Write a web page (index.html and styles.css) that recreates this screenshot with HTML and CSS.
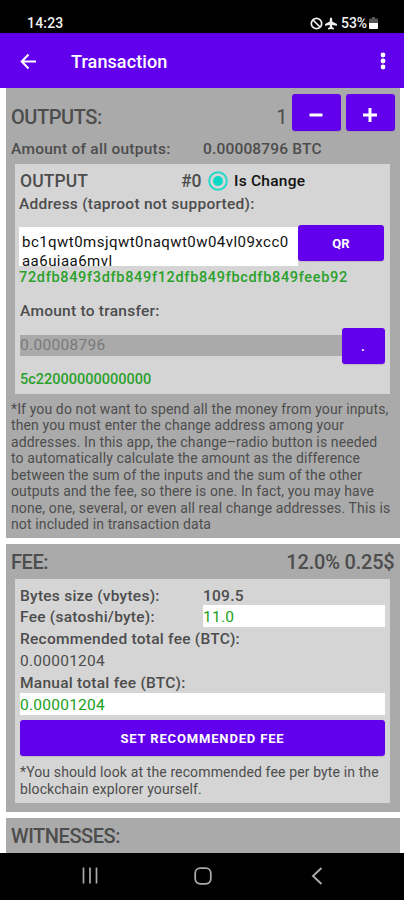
FILE: index.html
```html
<!DOCTYPE html>
<html lang="en">
<head>
<meta charset="utf-8">
<title>Transaction</title>
<link rel="stylesheet" href="styles.css">
</head>
<body>
<div class="status">
  <span class="clock">14:23</span>
  <span class="indicators">
    <svg width="13" height="13" viewBox="0 0 13 13"><circle cx="6.5" cy="6.5" r="5.2" fill="none" stroke="#eee" stroke-width="1.7"/><path d="M3 3l7 7" stroke="#eee" stroke-width="1.7"/></svg>
    <svg class="plane" width="12" height="13" viewBox="0 0 12 13"><path d="M6 .5q1.200 0 1.200 1.500v2.500l4.800 2.500v1.800L7.200 8v2l1.800 1.200v1.300L6 12l-3 .5v-1.300L4.800 10V8L0 8.800V7l4.800-2.500V2Q4.800 .5 6 .5z" fill="#eee"/></svg>
    <span class="percent">53%</span>
    <svg class="battery" width="9" height="12" viewBox="0 0 9 12"><path d="M3 0h3v1.500h2q1 0 1 1V6H0V2.500q0-1 1-1h2z" fill="#555"/><path d="M0 6h9v5q0 1-1 1H1q-1 0-1-1z" fill="#fff"/></svg>
  </span>
</div>
<header class="appbar">
  <svg class="back" width="17" height="17" viewBox="0 0 17 17"><path d="M8.500 1.500L1.700 8.500l6.800 7M2 8.500h14" fill="none" stroke="#fff" stroke-width="2"/></svg>
  <h1 class="title">Transaction</h1>
  <svg class="more" width="6" height="18" viewBox="0 0 6 18"><g fill="#fff"><circle cx="3" cy="3" r="2.400"/><circle cx="3" cy="9" r="2.400"/><circle cx="3" cy="15" r="2.400"/></g></svg>
</header>
<main class="content">
  <section class="section outputs">
    <div class="heading-row">
      <h2 class="heading outputs-label">OUTPUTS:</h2>
      <span class="count">1</span>
      <button class="button step"><svg width="16" height="16" viewBox="0 0 16 16"><path d="M1.500 8h13" stroke="#fff" stroke-width="3"/></svg></button>
      <button class="button step"><svg width="16" height="16" viewBox="0 0 16 16"><path d="M1 8h14M8 1v14" stroke="#fff" stroke-width="3"/></svg></button>
    </div>
    <div class="row total"><span class="name">Amount of all outputs:</span><span class="value">0.00008796 BTC</span></div>
    <div class="card output">
      <div class="output-head">
        <span class="output-label">OUTPUT</span><span class="number">#0</span>
        <svg class="radio" width="20" height="20" viewBox="0 0 20 20"><circle cx="10" cy="10" r="8.800" fill="none" stroke="#1fd8c8" stroke-width="1.900"/><circle cx="10" cy="10" r="5" fill="#0cdac6"/></svg>
        <span class="change">Is Change</span>
      </div>
      <div class="label address-label">Address (taproot not supported):</div>
      <div class="address-row">
        <div class="address">bc1qwt0msjqwt0naqwt0w04vl09xcc0<br>aa6uiaa6mvl</div>
        <button class="button qr">QR</button>
      </div>
      <div class="hex hash">72dfb849f3dfb849f12dfb849fbcdfb849feeb92</div>
      <div class="label transfer-label">Amount to transfer:</div>
      <div class="amount-row">
        <div class="amount">0.00008796</div>
        <button class="button dot">.</button>
      </div>
      <div class="hex amount-hex">5c22000000000000</div>
    </div>
    <p class="note explain">*If you do not want to spend all the money from your inputs,<br>then you must enter the change address among your<br>addresses. In this app, the change–radio button is needed<br>to automatically calculate the amount as the difference<br>between the sum of the inputs and the sum of the other<br>outputs and the fee, so there is one. In fact, you may have<br>none, one, several, or even all real change addresses. This is<br>not included in transaction data</p>
  </section>
  <section class="section fee">
    <div class="fee-head"><h2 class="heading fee-label">FEE:</h2><span class="rate">12.0% 0.25$</span></div>
    <div class="card fee-card">
      <div class="row"><span class="name">Bytes size (vbytes):</span><span class="value">109.5</span></div>
      <div class="row"><span class="name">Fee (satoshi/byte):</span><span class="value field per-byte">11.0</span></div>
      <div class="row">Recommended total fee (BTC):</div>
      <div class="row plain">0.00001204</div>
      <div class="row">Manual total fee (BTC):</div>
      <div class="row field plain">0.00001204</div>
      <button class="button set">SET RECOMMENDED FEE</button>
      <p class="note hint">*You should look at the recommended fee per byte in the<br>blockchain explorer yourself.</p>
    </div>
  </section>
  <section class="section witnesses"><h2 class="heading">WITNESSES:</h2></section>
</main>
<nav class="navbar">
  <svg width="16" height="17" viewBox="0 0 16 17"><path d="M1.500 .5v16M8 .5v16M14.500 .5v16" stroke="#aaa" stroke-width="1.700"/></svg>
  <svg class="home" width="18" height="18" viewBox="0 0 18 18"><rect x="1.200" y="1.200" width="15.600" height="15.600" rx="5" fill="none" stroke="#aaa" stroke-width="1.800"/></svg>
  <svg width="12" height="18" viewBox="0 0 12 18"><path d="M10.500 1L2 9l8.500 8" fill="none" stroke="#aaa" stroke-width="1.900"/></svg>
</nav>
</body>
</html>
```
FILE: styles.css
```css
* { box-sizing: border-box; }
body { margin: 0; width: 404px; height: 900px; overflow: hidden; background: #fff; color: #4d4d4d; font-family: Roboto, "Liberation Sans", sans-serif; font-weight: 500; white-space: nowrap; display: flex; flex-direction: column; }
h1, h2, p { margin: 0; }
svg { display: block; flex: none; }
.status { height: 33px; flex: none; background: #000; color: #f2f2f2; display: flex; justify-content: space-between; padding: 13px 26px 0 27px; font-size: 14px; line-height: 20px; }
.clock { letter-spacing: .2px; }
.indicators { display: flex; align-items: center; }
.plane { margin-left: 2px; }
.percent { margin-left: 4px; letter-spacing: -.1px; }
.battery { margin-left: 2px; }
.appbar { height: 55px; flex: none; background: #6200ee; display: flex; align-items: center; padding: 1px 18px 0 20px; }
.title { margin-left: 34px; flex: 1; color: #fff; font-size: 18px; font-weight: 500; letter-spacing: .1px; }
.content { height: 765px; flex: none; overflow: hidden; padding: 0 4.5px 0 6px; }
.section { background: #aaa; }
.heading { font-size: 20px; line-height: 24px; font-weight: 500; letter-spacing: -.45px; }
.outputs { height: 450px; padding: 5px 5px 0; }
.heading-row { height: 38px; display: flex; align-items: center; padding-top: 1px; }
.outputs-label { flex: 1; padding-top: 9px; }
.count { font-size: 20px; padding: 9px 4px 0 0; font-weight: 400; }
.button { border: 0; border-radius: 3px; background: #6200ee; color: #fff; font: 700 13px Roboto, sans-serif; padding: 0; display: flex; align-items: center; justify-content: center; box-shadow: 0 1px 1px #7774; }
.step { width: 49px; height: 37px; padding-top: 5px; }
.step + .step { margin-left: 5px; }
.row { height: 21.9px; line-height: 24px; font-size: 15.500px; display: flex; letter-spacing: .25px; }
.name { width: 183px; flex: none; }
.total { height: 33px; padding-top: 6px; }
.total .name { width: 192px; }
.total .value { letter-spacing: .17px; }
.card { background: #d5d5d5; margin: 0 5px 0 4px; padding: 0 5px; }
.output { height: 230px; }
.output-head { height: 32px; display: flex; align-items: center; padding-top: 2px; }
.output-label { width: 161px; font-size: 17.500px; letter-spacing: .1px; }
.number { width: 27px; font-size: 17.500px; }
.change { margin-left: 6px; color: #111; font-size: 15.500px; letter-spacing: .25px; }
.label { font-size: 15.500px; line-height: 20px; letter-spacing: .25px; }
.address-label { margin: -2px 0 0 -1px; }
.address-row { height: 41px; margin-top: 11px; display: flex; }
.address { margin: 2px 0 0 -1px; width: 279px; height: 39px; overflow: hidden; background: #fff; padding: 6px 0 0 3px; color: #111; font-size: 15px; line-height: 18.500px; font-weight: 400; letter-spacing: .46px; }
.qr { width: 86px; height: 36px; }
.hex { color: #2ba12b; font-size: 14.500px; line-height: 18px; }
.hash { margin: 3px 0 0 -1px; letter-spacing: .67px; }
.transfer-label { margin-top: 14px; }
.amount-row { height: 36px; margin-top: 7px; display: flex; align-items: center; }
.amount { flex: 1; height: 21px; margin-top: -2px; background: #aaa; color: #797979; font-size: 15.500px; line-height: 20px; font-weight: 400; letter-spacing: .3px; }
.dot { width: 43px; height: 36px; }
.amount-hex { margin-top: 7px; }
.note { font-weight: 400; font-size: 14px; line-height: 16.500px; letter-spacing: .125px; }
.explain { margin-top: 6.500px; }
.fee { height: 268.500px; margin-top: 5.500px; padding: 0 5px; }
.fee-head { height: 35px; display: flex; justify-content: space-between; align-items: center; padding-top: 2px; }
.rate { font-size: 20px; letter-spacing: -.2px; }
.fee-card { height: 224px; padding-top: 5px; }
.fee-card .row { line-height: 25px; }
.field { background: #fff; color: #18a018; font-weight: 400; }
.per-byte { width: 182px; }
.plain { font-weight: 400; }
.set { width: 365px; height: 36px; margin-top: 5.500px; letter-spacing: .850px; }
.hint { margin-top: 8px; }
.witnesses { height: 36px; margin-top: 5.500px; padding: 6px 5px; }
.navbar { height: 47px; flex: none; background: #000; display: flex; align-items: center; justify-content: space-between; padding: 0 81px 2px 82px; }
.home { margin-right: 3px; }
```
